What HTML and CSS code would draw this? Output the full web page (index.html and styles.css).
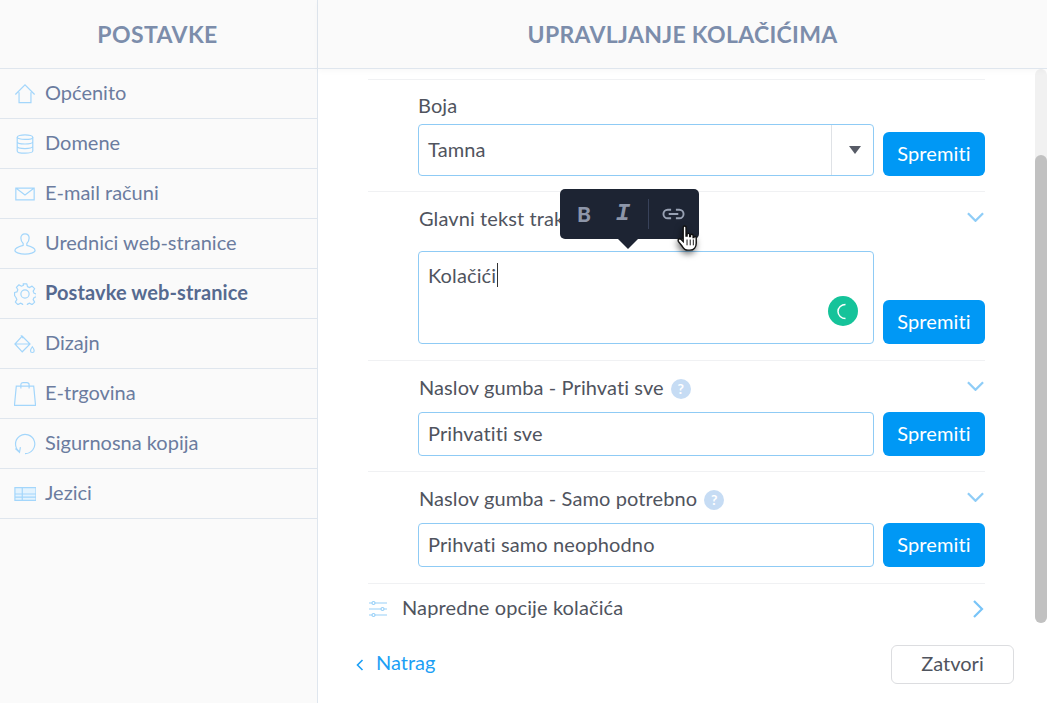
FILE: index.html
```html
<!DOCTYPE html>
<html lang="hr">
<head>
<meta charset="utf-8">
<title>Postavke</title>
<link rel="stylesheet" href="styles.css">
</head>
<body>
<div class="app">
  <aside class="sidebar">
    <h2 class="side-title">POSTAVKE</h2>
    <nav class="menu">
      <a class="item"><svg class="ic" viewBox="0 0 24 24"><path d="M1.500 12.500 12 2l10.500 10.500M5.500 10v11.500h13V10"/></svg><span>Općenito</span></a>
      <a class="item"><svg class="ic" viewBox="0 0 24 24"><ellipse cx="12" cy="4.500" rx="8.500" ry="2.500"/><path d="M3.500 4.500v15c0 1.500 3.800 2.500 8.500 2.500s8.500-1 8.500-2.500v-15M3.500 9.500c0 1.500 3.800 2.500 8.500 2.500s8.500-1 8.500-2.500M3.500 14.500c0 1.500 3.800 2.500 8.500 2.500s8.500-1 8.500-2.500"/></svg><span>Domene</span></a>
      <a class="item"><svg class="ic" viewBox="0 0 24 24"><path d="M2 5.500h20v13H2zM2 5.500l10 7.500 10-7.500"/></svg><span>E-mail računi</span></a>
      <a class="item"><svg class="ic" viewBox="0 0 24 24"><path d="M12 1c3 0 4.500 2 4.500 4.500 0 3-1.500 5-2.500 6v2c3 .8 9 2.500 9 5.500 0 2.500-6 4-11 4S1 21.500 1 19c0-3 6-4.700 9-5.500v-2c-1-1-2.500-3-2.500-6C7.500 3 9 1 12 1z"/></svg><span>Urednici web-stranice</span></a>
      <a class="item item-on"><svg class="ic" viewBox="0 0 24 24"><circle cx="12" cy="12" r="4.500"/><path d="M10 1h4l.7 3 2.300 1 2.700-1.600 2.800 2.800-1.600 2.700 1 2.300 2.600.7v3.200l-2.600.7-1 2.300 1.600 2.700-2.800 2.800-2.700-1.600-2.300 1-.7 2.900h-4l-.7-2.900-2.300-1-2.700 1.600-2.800-2.800 1.600-2.700-1-2.300L.600 13.600v-3.200l2.600-.7 1-2.300-1.600-2.700 2.800-2.800 2.700 1.600 2.300-1z" stroke-linejoin="round"/></svg><span>Postavke web-stranice</span></a>
      <a class="item"><svg class="ic" viewBox="0 0 24 24"><path d="M7.500 2.500l2.500 3M9 3.500 17.500 12 9 20.500 1 12zM1.500 12h15.500"/><path d="M20 15c1.500 2 2 3 2 4.300a2 2 0 0 1-4 0c0-1.300.500-2.300 2-4.300z"/></svg><span>Dizajn</span></a>
      <a class="item"><svg class="ic ic-tall" viewBox="0 0 24 27"><path d="M2.500 5h19l2 21H.5zM7.500 7.500V3.500C7.500 2 8.500 1 10 1h4c1.500 0 2.500 1 2.500 2.500v4"/></svg><span>E-trgovina</span></a>
      <a class="item"><svg class="ic" viewBox="0 0 24 24"><path d="M6 20.500A10.500 10.500 0 1 1 12 22.500M1.500 17l4.500 4 1-5.500"/></svg><span>Sigurnosna kopija</span></a>
      <a class="item"><svg class="ic" viewBox="0 0 24 24"><path class="cells" d="M1 5h23v14H1z"/><path d="M1 5h23v14H1zM1 12h23M1 15.500h23M9 5v14"/></svg><span>Jezici</span></a>
    </nav>
  </aside>

  <main class="main">
    <h1 class="main-title">UPRAVLJANJE KOLAČIĆIMA</h1>
    <div class="panel">
      <div class="content">
        <section class="row row-first">
          <div class="label label-flush">Boja</div>
          <div class="field">
            <div class="control select"><span class="value">Tamna</span><span class="caret-box"><i class="caret"></i></span></div>
            <button class="save">Spremiti</button>
          </div>
        </section>
        <section class="row row-text">
          <div class="label">Glavni tekst trake<svg class="chev" viewBox="0 0 18 10"><path d="M1 1l8 8 8-8"/></svg></div>
          <div class="field">
            <div class="control area"><span class="value">Kolačići</span><i class="cursor"></i>
              <span class="gram"><svg viewBox="0 0 30 30"><path d="M17.500 8.500a7.500 7 0 0 0 0 14"/></svg></span>
            </div>
            <button class="save">Spremiti</button>
          </div>
        </section>
        <section class="row">
          <div class="label">Naslov gumba - Prihvati sve<span class="help">?</span><svg class="chev" viewBox="0 0 18 10"><path d="M1 1l8 8 8-8"/></svg></div>
          <div class="field">
            <div class="control"><span class="value">Prihvatiti sve</span></div>
            <button class="save">Spremiti</button>
          </div>
        </section>
        <section class="row row-last">
          <div class="label">Naslov gumba - Samo potrebno<span class="help">?</span><svg class="chev" viewBox="0 0 18 10"><path d="M1 1l8 8 8-8"/></svg></div>
          <div class="field">
            <div class="control"><span class="value">Prihvati samo neophodno</span></div>
            <button class="save">Spremiti</button>
          </div>
        </section>
        <section class="advanced">
          <svg class="sliders" viewBox="0 0 20 18"><path d="M1 3h3M7 3h12M1 9h12M16 9h3M1 15h3M7 15h12"/><circle cx="5.500" cy="3" r="1.500"/><circle cx="14.500" cy="9" r="1.500"/><circle cx="5.500" cy="15" r="1.500"/></svg>
          <span class="adv-text">Napredne opcije kolačića</span>
          <svg class="chev-right" viewBox="0 0 10 18"><path d="M1 1l8 8-8 8"/></svg>
        </section>
        <footer class="foot">
          <a class="back"><svg class="back-ic" viewBox="0 0 8 12"><path d="M6.500 1 1.500 6l5 5"/></svg><span class="back-text">Natrag</span></a>
          <button class="close">Zatvori</button>
        </footer>
      </div>
      <div class="scroll"><div class="thumb"></div></div>

      <div class="toolbar">
        <span class="tb-b">B</span>
        <span class="tb-i">I</span>
        <i class="tb-sep"></i>
        <svg class="tb-link" viewBox="0 0 24 12"><path d="M9.500 1.500H6a4.500 4.500 0 0 0 0 9h3.500M14.500 1.500H18a4.500 4.500 0 0 1 0 9h-3.500M7 6h10"/></svg>
      </div>
      <svg class="hand" viewBox="0 0 24 30"><path d="M7 2.500c0-2 3-2 3 0v9l1 0V10c0-1.800 2.800-1.800 2.800 0v2l.7 0v-1c0-1.800 2.800-1.800 2.800 0v2l.7 0c0-1.600 2.500-1.600 2.500 0v6c0 4-2.500 7-6.500 7h-2c-3 0-4.500-1.500-6-4L2 17c-1-2 1.300-3.500 3-2l2 2z"/><path class="hand-line" d="M11 15v6M14.300 15v6M17.500 15v6"/></svg>
    </div>
  </main>
</div>
</body>
</html>
```
FILE: styles.css
```css
* { box-sizing: border-box; }
html, body { margin: 0; height: 100%; }
body { font-family: "Lato", "Liberation Sans", sans-serif; color: #50545e; background: #fff; overflow: hidden; }
.app { display: flex; width: 1047px; height: 703px; }

.sidebar { width: 318px; flex: none; background: #fafafa; border-right: 1px solid #dfe6ee; }
.side-title { margin: 0; height: 69px; padding-right: 2px; display: flex; align-items: center; justify-content: center; font-size: 23px; font-weight: 700; color: #7c8dab; border-bottom: 1px solid #dfe6ee; letter-spacing: .4px; }
.menu { display: flex; flex-direction: column; }
.item { height: 50px; display: flex; align-items: center; gap: 9px; padding-left: 14px; border-bottom: 1px solid #dfe6ee; font-size: 20px; color: #6b7c9f; }
.item span { padding-bottom: 4px; }
.item-on { font-weight: 700; color: #566a90; letter-spacing: .1px; }
.ic { width: 22px; height: 22px; flex: none; fill: none; stroke: #a3d6fb; stroke-width: 1.300; }
.ic-tall { height: 26px; }
.cells { fill: #e3f3fe; stroke: none; }

.main { flex: 1; min-width: 0; display: flex; flex-direction: column; }
.main-title { position: relative; z-index: 1; margin: 0; height: 69px; flex: none; display: flex; align-items: center; justify-content: center; font-size: 23px; font-weight: 700; color: #7c8dab; background: #fafafa; border-bottom: 1px solid #dfe6ee; box-shadow: 0 2px 6px rgba(0,0,0,.03); letter-spacing: .3px; }
.panel { position: relative; flex: 1; display: flex; min-height: 0; }
.content { flex: 1; min-width: 0; padding: 10px 50px 0; }
.scroll { width: 12px; height: 554px; flex: none; background: #f1f1f1; border-radius: 6px; padding-top: 86px; }
.thumb { height: 468px; background: #c1c1c1; border-radius: 6px; }

.row { border-top: 1px solid #f0f1f3; padding: 15px 0 15px 50px; }
.row-text, .row-last { padding-bottom: 16px; }
.row-first { padding-top: 14px; }
.label { position: relative; height: 24px; margin-bottom: 12px; padding-left: 1px; font-size: 20px; line-height: 22px; letter-spacing: .1px; color: #50545e; white-space: nowrap; }
.label-flush { padding-left: 0; margin-bottom: 6px; }
.row-text .label { margin-bottom: 20px; }
.field { display: flex; align-items: flex-end; gap: 9px; }
.control { position: relative; width: 456px; height: 44px; display: flex; align-items: center; padding: 0 0 3px 9px; border: 1px solid #8fcbf5; border-radius: 4px; background: #fff; font-size: 20px; letter-spacing: .12px; color: #50545e; }
.select { height: 52px; }
.area { height: 93px; align-items: flex-start; padding: 11px 0 0 9px; }
.value { line-height: 24px; }
.caret-box { position: absolute; right: 0; top: 0; bottom: 0; width: 42px; padding-left: 4px; border-left: 1px solid #dfe2e6; display: flex; align-items: center; justify-content: center; }
.caret { width: 0; height: 0; border-left: 6.500px solid transparent; border-right: 6.500px solid transparent; border-top: 8px solid #575b66; }
.cursor { width: 1px; height: 24px; background: #333; margin-left: 1px; }
.gram { position: absolute; right: 15px; bottom: 17px; width: 30px; height: 30px; border-radius: 50%; background: #15c39a; }
.gram svg { display: block; width: 30px; height: 30px; fill: none; stroke: #fff; stroke-width: 1.500; }
.save { width: 102px; height: 44px; flex: none; padding: 0 0 2px; border: 0; border-radius: 6px; background: #0098f5; color: #fff; font: 400 20px "Lato", "Liberation Sans", sans-serif; letter-spacing: .12px; }
.chev { position: absolute; right: 1px; top: 5px; width: 17px; height: 10px; fill: none; stroke: #8fcdf7; stroke-width: 2.400; }
.help { display: inline-flex; width: 20px; height: 20px; margin-left: 7px; vertical-align: 1px; align-items: center; justify-content: center; border-radius: 50%; background: #c6dcf4; color: #fff; font-size: 14px; font-weight: 700; line-height: 1; }

.advanced { display: flex; align-items: center; height: 50px; border-top: 1px solid #f0f1f3; }
.sliders { width: 20px; height: 18px; flex: none; fill: none; stroke: #98d0f8; stroke-width: 1.200; }
.adv-text { flex: 1; margin-left: 14px; padding-bottom: 4px; font-size: 20px; letter-spacing: .12px; color: #50545e; }
.chev-right { width: 12px; height: 18px; margin-right: 1px; fill: none; stroke: #78c4f8; stroke-width: 2.200; }

.foot { display: flex; align-items: center; justify-content: space-between; height: 39px; margin: 12px -29px 0 -12px; }
.back { display: flex; align-items: center; gap: 12px; font-size: 20px; letter-spacing: 0; color: #1c9ff5; }
.back-text { padding-bottom: 6px; }
.back-ic { width: 8px; height: 12px; fill: none; stroke: #1c9ff5; stroke-width: 1.600; }
.close { width: 123px; height: 39px; padding: 0 0 4px; border: 1px solid #dcdde0; border-radius: 6px; background: #fff; color: #50545e; font: 400 20px "Lato", "Liberation Sans", sans-serif; }

.toolbar { position: absolute; left: 242px; top: 120px; width: 139px; height: 50px; display: flex; align-items: center; background: #1d2433; border-radius: 5px; color: #8d96a9; }
.toolbar::after { content: ""; position: absolute; left: 58px; bottom: -10px; width: 0; height: 0; border-left: 10px solid transparent; border-right: 10px solid transparent; border-top: 10px solid #1d2433; }
.tb-b { position: absolute; left: 17px; top: 11px; font: 900 21px/28px "Lato", sans-serif; }
.tb-i { position: absolute; left: 52px; top: 11px; width: 22px; text-align: center; font: italic 700 24px/28px "Liberation Mono", monospace; }
.tb-sep { position: absolute; left: 88px; top: 10px; width: 1px; height: 30px; background: #38425a; }
.tb-link { position: absolute; left: 102px; top: 19px; width: 23px; height: 12px; fill: none; stroke: #98a1b3; stroke-width: 2; }
.hand { position: absolute; left: 358px; top: 156px; width: 24px; height: 29px; fill: #fff; stroke: #111; stroke-width: 1.500; filter: drop-shadow(-1px 3px 3px rgba(0,0,0,.55)); }
.hand-line { fill: none; stroke-width: 1; }
```
